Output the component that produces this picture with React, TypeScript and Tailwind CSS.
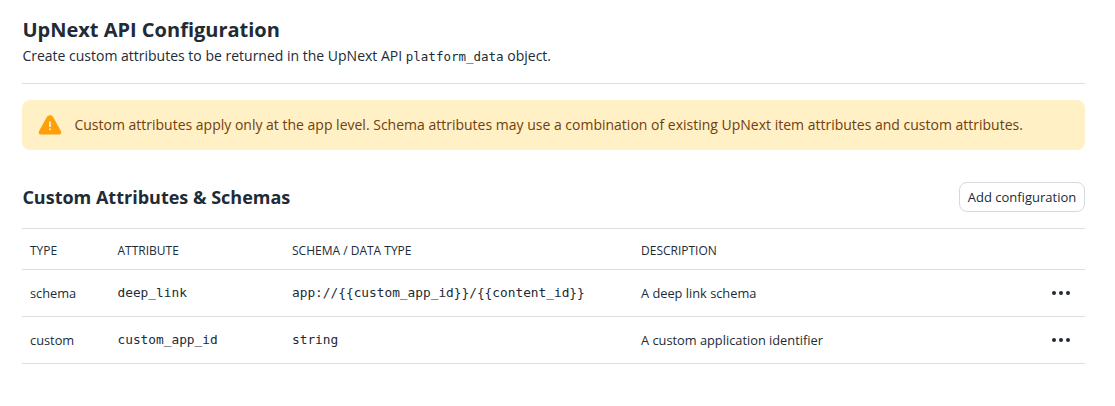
const rows = [
  { type: "schema", attribute: "deep_link", schema: "app://{{custom_app_id}}/{{content_id}}", description: "A deep link schema" },
  { type: "custom", attribute: "custom_app_id", schema: "string", description: "A custom application identifier" },
];

const grid = "grid grid-cols-[87.5px_174.5px_349px_1fr_auto] items-center border-b border-[#dcdddf] pl-2 pr-[15px]";

export default function App() {
  return (
    <main className="h-[406px] w-[1115px] bg-white pl-[22px] pr-[30px] pt-[17px] font-['Open_Sans',sans-serif] text-[12.8px] text-[#212b36]">
      <header className="h-[67px] border-b border-[#dcdddf]">
        <h1 className="pl-[0.4px] text-[20px] leading-[26px] font-bold">UpNext API Configuration</h1>
        <p className="pl-[0.4px] text-[14px] leading-[26px]">
          Create custom attributes to be returned in the UpNext API{" "}
          <code className="font-['DejaVu_Sans_Mono',monospace] text-[12.5px]">platform_data</code> object.
        </p>
      </header>
      <div className="mt-4 flex h-[50px] items-center rounded-lg bg-[#fff0c5] pl-4 text-[14px] text-[#733e0c]">
        <svg viewBox="0 0 24 24" className="mr-[12.4px] h-6 w-6">
          <path d="M8.7 4.2 1.4 17.6C-.1 20.3 1 21.5 3.4 21.5h17.2c2.4 0 3.5-1.2 2-3.9L15.3 4.2c-1.5-2.7-5.1-2.7-6.6 0Z" fill="#ff9f0a" />
          <path d="M12 8.4v5.6M12 15.4v1.8" stroke="#fff0c5" strokeWidth="1.8" />
        </svg>
        <span className="pb-[2px]">Custom attributes apply only at the app level. Schema attributes may use a combination of existing UpNext item attributes and custom attributes.</span>
      </div>
      <section className="mt-8">
        <div className="flex h-[47px] items-start justify-between border-b border-[#dcdddf]">
          <h2 className="pl-[0.4px] text-[18px] leading-[30px] font-bold">Custom Attributes &amp; Schemas</h2>
          <button className="h-[30px] w-[126px] rounded-lg border border-[#d8d8e0] pt-[2px] text-[13px]">Add configuration</button>
        </div>
        <div className={`${grid} h-[41px] pt-[4px] text-[12px]`}>
          <span>TYPE</span><span>ATTRIBUTE</span><span>SCHEMA / DATA TYPE</span><span>DESCRIPTION</span>
        </div>
        {rows.map((row) => (
          <div key={row.attribute} className={`${grid} h-[47px]`}>
            <span className="pt-[2px]">{row.type}</span>
            <code className="font-['DejaVu_Sans_Mono',monospace] text-[12.8px]">{row.attribute}</code>
            <code className="font-['DejaVu_Sans_Mono',monospace] text-[12.8px]">{row.schema}</code>
            <span className="pt-[2px]">{row.description}</span>
            <button aria-label="Row actions">
              <svg viewBox="0 0 18 4" className="h-1 w-[18px] fill-current"><circle cx="2" cy="2" r="2" /><circle cx="9" cy="2" r="2" /><circle cx="16" cy="2" r="2" /></svg>
            </button>
          </div>
        ))}
      </section>
    </main>
  );
}
